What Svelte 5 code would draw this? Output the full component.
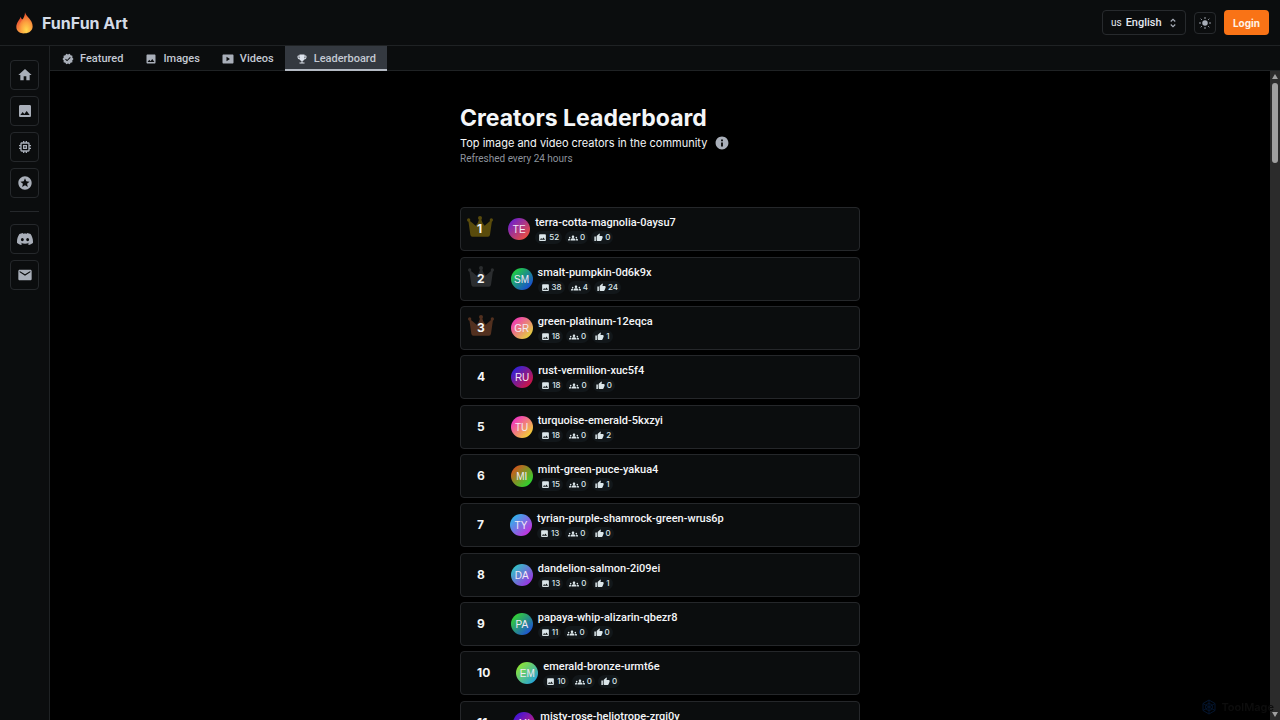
<script>
  const paths = {
    verified: 'M23 12l-2.44-2.79.34-3.69-3.61-.82-1.89-3.2L12 2.96 8.6 1.5 6.71 4.69 3.1 5.5l.34 3.7L1 12l2.44 2.79-.34 3.7 3.61.82L8.6 22.5l3.4-1.47 3.4 1.46 1.89-3.19 3.61-.82-.34-3.69L23 12zm-12.91 4.72l-3.8-3.81 1.48-1.48 2.32 2.33 5.85-5.87 1.48 1.48-7.33 7.35z',
    image: 'M21 19V5c0-1.1-.9-2-2-2H5c-1.1 0-2 .9-2 2v14c0 1.1.9 2 2 2h14c1.1 0 2-.9 2-2zM8.5 13.5l2.5 3.01L14.5 12l4.5 6H5l3.5-4.5z',
    video: 'M21 3H3c-1.1 0-2 .9-2 2v14c0 1.1.9 2 2 2h18c1.1 0 2-.9 2-2V5c0-1.1-.9-2-2-2zM9 16.5v-9l7 4.5z',
    trophy: 'M19 5h-2V3H7v2H5c-1.1 0-2 .9-2 2v1c0 2.55 1.92 4.63 4.39 4.94.63 1.5 1.98 2.63 3.61 2.96V19H7v2h10v-2h-4v-3.1c1.63-.33 2.98-1.46 3.61-2.96C19.08 12.63 21 10.55 21 8V7c0-1.1-.9-2-2-2zM5 8V7h2v3.82C5.84 10.4 5 9.3 5 8zm14 0c0 1.3-.84 2.4-2 2.82V7h2v1z',
    home: 'M10 20v-6h4v6h5v-8h3L12 3 2 12h3v8z',
    chip: 'M15 9H9v6h6V9zm-2 4h-2v-2h2v2zm8-2V9h-2V7c0-1.1-.9-2-2-2h-2V3h-2v2h-2V3H9v2H7c-1.1 0-2 .9-2 2v2H3v2h2v2H3v2h2v2c0 1.1.9 2 2 2h2v2h2v-2h2v2h2v-2h2c1.1 0 2-.9 2-2v-2h2v-2h-2v-2h2zm-4 6H7V7h10v10z',
    star: 'M11.99 2C6.47 2 2 6.48 2 12s4.47 10 9.99 10C17.52 22 22 17.52 22 12S17.52 2 11.99 2zm4.24 16L12 15.45 7.77 18l1.12-4.81-3.73-3.23 4.92-.42L12 5l1.92 4.53 4.92.42-3.73 3.23L16.23 18z',
    discord: 'M20.317 4.37a19.79 19.79 0 00-4.885-1.515.074.074 0 00-.079.037c-.211.375-.445.865-.608 1.25-1.845-.276-3.68-.276-5.487 0-.164-.393-.406-.874-.618-1.25a.077.077 0 00-.079-.037 19.736 19.736 0 00-4.885 1.515.07.07 0 00-.032.028C.533 9.046-.319 13.58.099 18.058a.082.082 0 00.031.056c2.053 1.508 4.041 2.423 5.993 3.029a.078.078 0 00.084-.028c.462-.63.873-1.295 1.226-1.994a.076.076 0 00-.042-.106c-.653-.248-1.274-.55-1.872-.892a.077.077 0 01-.008-.128c.126-.094.252-.192.372-.291a.074.074 0 01.078-.011c3.928 1.793 8.18 1.793 12.061 0a.074.074 0 01.079.01c.12.099.246.198.373.292a.077.077 0 01-.007.128 12.299 12.299 0 01-1.873.891.077.077 0 00-.041.107c.36.698.772 1.363 1.225 1.993a.076.076 0 00.084.029c1.961-.607 3.95-1.522 6.002-3.03a.077.077 0 00.032-.055c.5-5.177-.838-9.674-3.549-13.66a.061.061 0 00-.031-.029zM8.02 15.331c-1.183 0-2.157-1.086-2.157-2.419s.956-2.419 2.157-2.419c1.211 0 2.176 1.095 2.157 2.419 0 1.333-.956 2.419-2.157 2.419zm7.975 0c-1.183 0-2.157-1.086-2.157-2.419s.955-2.419 2.157-2.419c1.211 0 2.176 1.095 2.157 2.419 0 1.333-.946 2.419-2.157 2.419z',
    mail: 'M20 4H4c-1.1 0-1.99.9-1.99 2L2 18c0 1.1.9 2 2 2h16c1.1 0 2-.9 2-2V6c0-1.1-.9-2-2-2zm0 4l-8 5-8-5V6l8 5 8-5v2z',
    groups: 'M12 12.75c1.63 0 3.07.39 4.24.9 1.08.48 1.76 1.56 1.76 2.73V18H6v-1.61c0-1.18.68-2.26 1.76-2.73 1.17-.52 2.61-.91 4.24-.91zM4 13c1.1 0 2-.9 2-2s-.9-2-2-2-2 .9-2 2 .9 2 2 2zm1.13 1.1c-.37-.06-.74-.1-1.13-.1-.99 0-1.93.21-2.78.58C.48 14.9 0 15.62 0 16.43V18h4.5v-1.61c0-.83.23-1.61.63-2.29zM20 13c1.1 0 2-.9 2-2s-.9-2-2-2-2 .9-2 2 .9 2 2 2zm4 3.43c0-.81-.48-1.53-1.22-1.85-.85-.37-1.79-.58-2.78-.58-.39 0-.76.04-1.13.1.4.68.63 1.46.63 2.29V18H24v-1.57zM12 6c1.66 0 3 1.34 3 3s-1.34 3-3 3-3-1.34-3-3 1.34-3 3-3z',
    thumb: 'M1 21h4V9H1v12zm22-11c0-1.1-.9-2-2-2h-6.31l.95-4.57.03-.32c0-.41-.17-.79-.44-1.06L14.17 1 7.59 7.59C7.22 7.95 7 8.45 7 9v10c0 1.1.9 2 2 2h9c.83 0 1.54-.5 1.84-1.22l3.02-7.05c.09-.23.14-.47.14-.73v-2z',
    info: 'M12 1C5.9 1 1 5.9 1 12s4.9 11 11 11 11-4.9 11-11S18.1 1 12 1zm1.5 17h-3v-7h3v7zm0-9h-3V6h3v3z'
  };

  const tabs = [
    { label: 'Featured', icon: 'verified' },
    { label: 'Images', icon: 'image' },
    { label: 'Videos', icon: 'video' },
    { label: 'Leaderboard', icon: 'trophy', active: true }
  ];

  const mainLinks = [
    { label: 'Home', icon: 'home' },
    { label: 'Images', icon: 'image' },
    { label: 'Models', icon: 'chip' },
    { label: 'Favorites', icon: 'star' }
  ];
  const contactLinks = [
    { label: 'Discord', icon: 'discord' },
    { label: 'Email', icon: 'mail' }
  ];

  const crowns = ['#594b0c', '#2b2d2f', '#52301f'];

  const creators = [
    { name: 'terra-cotta-magnolia-0aysu7', images: 52, followers: 0, likes: 0, from: '#6a1fd0', to: '#f0503a' },
    { name: 'smalt-pumpkin-0d6k9x', images: 38, followers: 4, likes: 24, from: '#22d43a', to: '#1746d8' },
    { name: 'green-platinum-12eqca', images: 18, followers: 0, likes: 1, from: '#f032b8', to: '#e2d838' },
    { name: 'rust-vermilion-xuc5f4', images: 18, followers: 0, likes: 0, from: '#2a22e0', to: '#d8143c' },
    { name: 'turquoise-emerald-5kxzyi', images: 18, followers: 0, likes: 2, from: '#f02cc8', to: '#f2d82c' },
    { name: 'mint-green-puce-yakua4', images: 15, followers: 0, likes: 1, from: '#d8501c', to: '#22dc30' },
    { name: 'tyrian-purple-shamrock-green-wrus6p', images: 13, followers: 0, likes: 0, from: '#28b8ec', to: '#cc28dc' },
    { name: 'dandelion-salmon-2i09ei', images: 13, followers: 0, likes: 1, from: '#2cc8c4', to: '#a02ce4' },
    { name: 'papaya-whip-alizarin-qbezr8', images: 11, followers: 0, likes: 0, from: '#34d82c', to: '#1c4cdc' },
    { name: 'emerald-bronze-urmt6e', images: 10, followers: 0, likes: 0, from: '#92e82c', to: '#20a0e0' },
    { name: 'misty-rose-heliotrope-zrqj0y', images: 10, followers: 0, likes: 0, from: '#3a14dc', to: '#e0206c' }
  ];
</script>

{#snippet icon(name)}
  <svg class="icon" viewBox="0 0 24 24" aria-hidden="true"><path fill-rule="evenodd" d={paths[name]} /></svg>
{/snippet}

<div class="app">
  <header>
    <a class="brand" href="#home">
      <svg class="flame" viewBox="0 0 51 66" aria-hidden="true">
        <defs>
          <linearGradient id="outer" x1="0.4" y1="0" x2="0.6" y2="1">
            <stop offset="0" stop-color="#e2452f" />
            <stop offset="0.6" stop-color="#f47a3a" />
            <stop offset="1" stop-color="#fdb04a" />
          </linearGradient>
          <radialGradient id="inner" cx="0.55" cy="0.85" r="0.75">
            <stop offset="0" stop-color="#ffd94f" />
            <stop offset="0.5" stop-color="#fda33f" />
            <stop offset="1" stop-color="#ee5a31" />
          </radialGradient>
        </defs>
        <path fill="url(#outer)" d="M14 14c-2 8-13 18-13 31 0 12 10 19 24 19l4-40-11-2c-2-2-3-5-4-8z" />
        <path fill="url(#inner)" d="M27 1c2 12 23 22 23 42 0 13-10 21-24 21S7 56 8 45C9 30 27 22 27 1z" />
      </svg>
      <span>FunFun Art</span>
    </a>
    <div class="actions">
      <div class="language">
        <label for="language">us</label>
        <select id="language" aria-label="Language"><option>English</option></select>
        <svg viewBox="0 0 8 12" aria-hidden="true"><path d="M1 4l3-3 3 3M1 8l3 3 3-3" /></svg>
      </div>
      <button class="theme" type="button" aria-label="Toggle theme">
        <svg viewBox="0 0 24 24" aria-hidden="true">
          <circle cx="12" cy="12" r="5.5" />
          <path d="M12 1v2M12 21v2M1 12h2M21 12h2M4 4l1 1M19 19l1 1M4 20l1-1M19 5l1-1" />
        </svg>
      </button>
      <button class="login" type="button">Login</button>
    </div>
  </header>

  <div class="body">
    <nav class="side" aria-label="Sections">
      {#each mainLinks as link}
        <a href="#{link.icon}" aria-label={link.label}>{@render icon(link.icon)}</a>
      {/each}
      <hr />
      {#each contactLinks as link}
        <a href="#{link.icon}" aria-label={link.label}>{@render icon(link.icon)}</a>
      {/each}
    </nav>

    <div class="content">
      <nav class="tabs" aria-label="Gallery">
        {#each tabs as tab}
          <a href="#{tab.label}" class:active={tab.active} aria-current={tab.active ? 'page' : undefined}>
            {@render icon(tab.icon)}<span>{tab.label}</span>
          </a>
        {/each}
      </nav>

      <div class="viewport">
        <main>
          <section class="board">
            <h1>Creators Leaderboard</h1>
            <p class="lead">Top image and video creators in the community {@render icon('info')}</p>
            <p class="note">Refreshed every 24 hours</p>
            <ol>
              {#each creators as creator, i}
                <li>
                  <div class="rank">
                    {#if crowns[i]}
                      <svg class="crown" viewBox="0 0 78 63" fill={crowns[i]} aria-hidden="true">
                        <path d="M4 14h4q10 8 18 15 8-9 11-21h5q3 12 11 21 8-7 17-15h5l-6 42q-1 6-6 6H16q-5 0-6-6z" />
                        <circle cx="5" cy="12" r="5" /><circle cx="39" cy="6" r="6" /><circle cx="73" cy="12" r="5" />
                      </svg>
                    {/if}
                    <span>{i + 1}</span>
                  </div>
                  <div class="avatar" style="background: linear-gradient(135deg, {creator.from} 10%, {creator.to} 90%)">
                    {creator.name.slice(0, 2).toUpperCase()}
                  </div>
                  <div class="info">
                    <a href="#{creator.name}">{creator.name}</a>
                    <div class="stats">
                      <span>{@render icon('image')}{creator.images}</span>
                      <span class="group">{@render icon('groups')}{creator.followers}</span>
                      <span>{@render icon('thumb')}{creator.likes}</span>
                    </div>
                  </div>
                </li>
              {/each}
            </ol>
          </section>
        </main>
        <div class="scrollbar" aria-hidden="true">
          <svg viewBox="0 0 6 5"><path d="M3 0l3 5H0z" /></svg>
          <div class="thumb"></div>
          <svg viewBox="0 0 6 5"><path d="M3 5L0 0h6z" /></svg>
        </div>
      </div>
    </div>
  </div>

  <div class="watermark">
    <svg viewBox="0 0 16 16" aria-hidden="true">
      <path d="M8 1l6 3.5v7L8 15l-6-3.5v-7z" />
      <path d="M8 1v7l6 3.5M2 4.5L8 8M2 11.5L8 8l6-3.5M8 8v7" />
      <circle cx="8" cy="8" r="3.5" />
    </svg>
    <span>ToolMage</span>
  </div>
</div>

<style>
  :global(body) {
    background: #000;
  }

  .app {
    --panel: #0b0d0e;
    --line: #1f2224;
    --muted: #a9afb9;
    --text: #d4dbe8;
    --compact: Roboto, "Liberation Sans", sans-serif;
    display: flex;
    flex-direction: column;
    height: 100vh;
    overflow: hidden;
    background: #000;
    color: #f4f6f8;
    font-family: Inter, "Liberation Sans", sans-serif;
  }

  * {
    box-sizing: border-box;
  }

  a {
    color: inherit;
    text-decoration: none;
  }

  button,
  select {
    font: inherit;
    color: inherit;
  }

  .icon {
    display: block;
    flex: none;
    width: 12px;
    height: 12px;
    fill: currentColor;
  }

  header {
    flex: none;
    display: flex;
    align-items: center;
    justify-content: space-between;
    height: 46px;
    padding: 0 11px 0 16px;
    background: var(--panel);
    border-bottom: 1px solid var(--line);
  }

  .brand {
    display: flex;
    align-items: center;
    gap: 9px;
    color: var(--text);
    font-size: 16px;
    font-weight: 700;
  }

  .flame {
    width: 17px;
    height: 22px;
  }

  .actions {
    display: flex;
    align-items: center;
    gap: 8px;
  }

  .language {
    display: flex;
    align-items: center;
    gap: 4px;
    height: 25px;
    width: 84px;
    padding: 0 9px 0 8px;
    border: 1px solid #272a2d;
    border-radius: 4px;
    color: #e3e8f0;
    font-family: var(--compact);
    font-size: 11px;
    font-weight: 500;
  }

  .language label {
    font-size: 10px;
    font-weight: 400;
  }

  .language select {
    flex: 1;
    min-width: 0;
    padding: 0;
    border: 0;
    background: transparent;
    appearance: none;
  }

  .language svg {
    width: 6px;
    height: 10px;
    fill: none;
    stroke: var(--muted);
    stroke-width: 1.5;
  }

  .theme {
    display: grid;
    place-items: center;
    width: 22px;
    height: 22px;
    padding: 0;
    border: 1px solid #272a2d;
    border-radius: 4px;
    background: transparent;
    color: var(--muted);
  }

  .theme svg {
    width: 12px;
    height: 12px;
    fill: currentColor;
    stroke: currentColor;
    stroke-width: 2;
    stroke-linecap: round;
  }

  .theme circle {
    stroke: none;
  }

  .login {
    height: 25px;
    padding: 0 9px;
    border: 0;
    border-radius: 4px;
    background: #f97316;
    color: #fff3e6;
    font-size: 10px;
    font-weight: 700;
    line-height: 12px;
  }

  .body {
    flex: 1;
    display: flex;
    min-height: 0;
  }

  .side {
    flex: none;
    display: flex;
    flex-direction: column;
    gap: 6px;
    width: 50px;
    padding: 14px 10px;
    background: var(--panel);
    border-right: 1px solid var(--line);
    color: var(--muted);
  }

  .side a {
    display: grid;
    place-items: center;
    height: 30px;
    border: 1px solid #25282b;
    border-radius: 4px;
  }

  .side .icon {
    width: 16px;
    height: 16px;
  }

  .side hr {
    width: 100%;
    height: 1px;
    margin: 7px 0 6px;
    border: 0;
    background: #25282b;
  }

  .content {
    flex: 1;
    display: flex;
    flex-direction: column;
    min-width: 0;
  }

  .tabs {
    flex: none;
    display: flex;
    height: 25px;
    padding-left: 1px;
    background: var(--panel);
    border-bottom: 1px solid var(--line);
    color: #c3c9d3;
    font-family: var(--compact);
    font-size: 11px;
    font-weight: 500;
  }

  .tabs a {
    display: flex;
    align-items: center;
    gap: 6px;
    height: 25px;
    padding: 2px 11px 0;
    border-bottom: 2px solid transparent;
  }

  .tabs .icon {
    color: var(--muted);
  }

  .tabs a.active {
    background: #343940;
    border-color: #b4bac3;
  }

  .tabs .active .icon {
    color: #dde3ec;
  }

  .viewport {
    flex: 1;
    display: flex;
    min-height: 0;
  }

  main {
    flex: 1;
    min-width: 0;
    overflow: hidden;
  }

  .board {
    max-width: 400px;
    margin: 0 auto;
    padding-top: 31px;
  }

  h1,
  p {
    margin: 0;
  }

  h1 {
    font-size: 23px;
    font-weight: 700;
    line-height: 32px;
  }

  .lead {
    display: flex;
    align-items: center;
    gap: 8px;
    font-size: 11px;
    line-height: 18px;
  }

  .lead .icon {
    width: 14px;
    height: 14px;
    color: var(--muted);
  }

  .note {
    color: #8d939c;
    font-family: var(--compact);
    font-size: 10px;
    line-height: 13px;
  }

  ol {
    display: flex;
    flex-direction: column;
    gap: 5px;
    margin: 42px 0 0;
    padding: 0;
    list-style: none;
  }

  li {
    flex: none;
    display: flex;
    align-items: center;
    height: 44px;
    padding: 0 16px;
    border: 1px solid #25272a;
    border-radius: 4px;
    background: var(--panel);
  }

  li:nth-child(3n + 1) {
    margin-bottom: 1px;
  }

  .rank {
    display: grid;
    place-items: center;
    margin-right: 26px;
    font-size: 12px;
    font-weight: 700;
    line-height: 16px;
  }

  .rank > * {
    grid-area: 1 / 1;
  }

  .rank span {
    position: relative;
  }

  .crown {
    width: 26px;
    height: 21px;
    margin: -5px -13px 0;
  }

  .avatar {
    flex: none;
    display: grid;
    place-items: center;
    width: 22px;
    height: 22px;
    margin-right: 5px;
    border-radius: 50%;
    color: #f3e9f5;
    font-family: "Liberation Sans", Arial, sans-serif;
    font-size: 10px;
  }

  .info {
    display: flex;
    flex-direction: column;
    gap: 1px;
    padding-top: 1px;
    font-family: var(--compact);
    font-size: 11px;
    font-weight: 500;
    line-height: 15px;
  }

  .stats {
    display: flex;
    gap: 3px;
    color: #dbe6ea;
    font-family: Inter, sans-serif;
    font-size: 8px;
    line-height: 13px;
  }

  .stats span {
    display: flex;
    align-items: center;
    gap: 2px;
    padding: 0 3px;
    border-radius: 7px;
    background: #12171a;
  }

  .stats .icon {
    width: 9px;
    height: 9px;
  }

  .stats .group .icon {
    width: 10px;
    height: 10px;
  }

  .scrollbar {
    flex: none;
    display: flex;
    flex-direction: column;
    align-items: center;
    gap: 4px;
    width: 10px;
    padding: 3px 0;
    background: #2b2b2b;
  }

  .scrollbar svg {
    width: 6px;
    height: 5px;
    fill: #a0a0a0;
  }

  .thumb {
    width: 6px;
    height: 80px;
    margin-bottom: auto;
    border-radius: 3px;
    background: #9f9f9f;
  }

  .watermark {
    position: fixed;
    right: 6px;
    bottom: 5px;
    display: flex;
    align-items: center;
    gap: 4px;
    color: #0d0d0d;
    font-size: 11px;
    font-weight: 600;
    line-height: 16px;
  }

  .watermark svg {
    width: 16px;
    height: 16px;
    fill: none;
    stroke: #04152e;
  }
</style>
